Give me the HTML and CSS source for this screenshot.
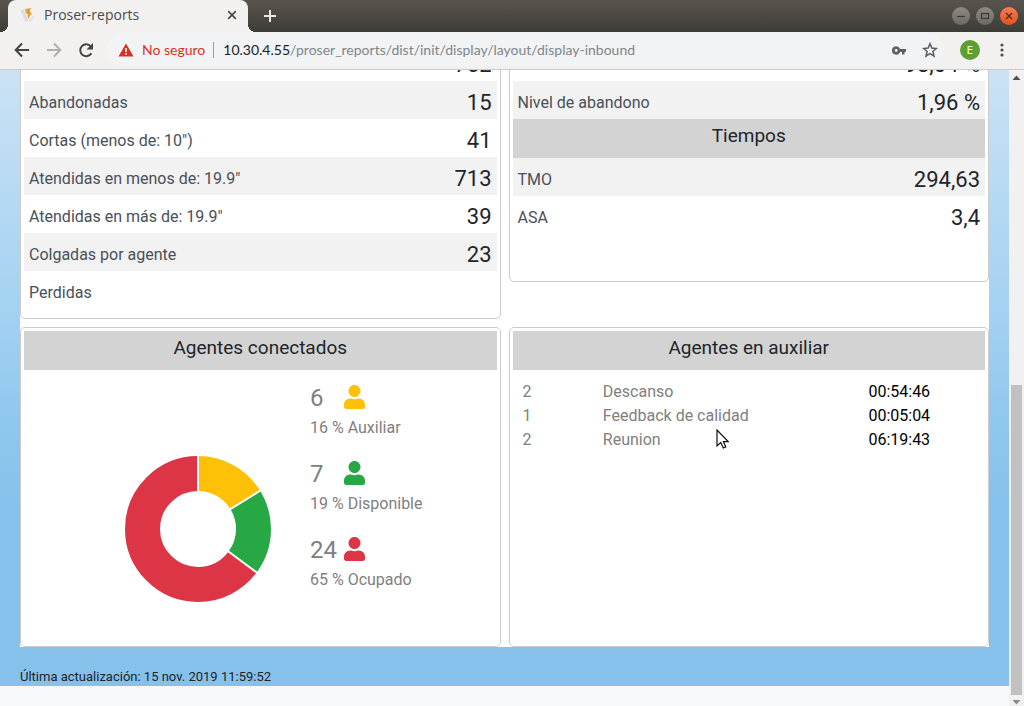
FILE: index.html
```html
<!DOCTYPE html>
<html lang="es">
<head>
<meta charset="utf-8">
<title>Proser-reports</title>
<link rel="stylesheet" href="styles.css">
</head>
<body>
<header class="browser">
  <div class="tabstrip">
    <div class="tab">
      <svg class="favicon" width="16" height="16" viewBox="0 0 16 16" aria-hidden="true"><path d="M.5 3.500l3-1.500 5 11.500-3 1.500z" fill="#d9dde8"/><path d="M5 2l6-1-1.500 4 2.500 1-4 6-.5-5-1.500-.5z" fill="#e8a33a"/><path d="M8 3l2 1-2 3z" fill="#c98d35"/><path d="M9 13.500l4.500-5 1 2-4 4.500z" fill="#e0e3ea"/></svg>
      <span class="tab-title">Proser-reports</span>
      <button class="tab-close" type="button" aria-label="Cerrar pestaña"><svg width="10" height="10" viewBox="0 0 10 10"><path d="M1.200 1.200l7.600 7.600M8.800 1.200l-7.600 7.600" stroke="#4a4a4a" stroke-width="1.700"/></svg></button>
    </div>
    <button class="new-tab" type="button" aria-label="Nueva pestaña"><svg width="12" height="12" viewBox="0 0 12 12"><path d="M6 0v12M0 6h12" stroke="#e8e7e3" stroke-width="2"/></svg></button>
    <div class="window-buttons">
      <button class="win" type="button" aria-label="Minimizar"><svg width="18" height="18" viewBox="0 0 18 18"><path d="M5 9.500h8" stroke="#3c3b37" stroke-width="1.200"/></svg></button>
      <button class="win" type="button" aria-label="Maximizar"><svg width="18" height="18" viewBox="0 0 18 18"><rect x="5.500" y="6.500" width="7" height="5" fill="none" stroke="#3c3b37" stroke-width="1.200"/></svg></button>
      <button class="win win-close" type="button" aria-label="Cerrar"><svg width="18" height="18" viewBox="0 0 18 18"><path d="M6 6l6 6M12 6l-6 6" stroke="#4a2a1a" stroke-width="1.200"/></svg></button>
    </div>
  </div>
  <div class="toolbar">
    <nav class="nav">
      <button type="button" aria-label="Atrás"><svg width="16" height="16" viewBox="0 0 16 16"><path d="M15 8H2M8 1.500L1.700 8 8 14.500" fill="none" stroke="#434343" stroke-width="2"/></svg></button>
      <button type="button" aria-label="Adelante"><svg width="16" height="16" viewBox="0 0 16 16"><path d="M1 8h13M8 1.500L14.300 8 8 14.500" fill="none" stroke="#b0b0b0" stroke-width="2"/></svg></button>
      <button type="button" aria-label="Recargar"><svg width="16" height="16" viewBox="0 0 16 16"><path d="M13.400 11.300A6 6 0 1 1 12.800 4.300" fill="none" stroke="#434343" stroke-width="2"/><path d="M15 1v6.500H8.500z" fill="#434343"/></svg></button>
    </nav>
    <div class="omnibox">
      <svg width="16" height="14" viewBox="0 0 16 14" aria-hidden="true"><path d="M8 .5L15.500 13.500H.5z" fill="#d93025"/><path d="M7.200 5h1.600v4H7.200zM7.200 10h1.600v1.700H7.200z" fill="#fff"/></svg>
      <span class="insecure">No seguro</span>
      <label class="host" for="url">10.30.4.55</label><input class="path" id="url" type="text" value="/proser_reports/dist/init/display/layout/display-inbound">
      <button type="button" aria-label="Contraseñas"><svg width="14" height="9" viewBox="0 0 14 9"><path d="M4.200.3a4.200 4.200 0 1 0 3.900 5.700H10v2.500h2.500V6H14V3H8.100A4.200 4.200 0 0 0 4.200.3zm0 2.800a1.400 1.400 0 1 1 0 2.800 1.400 1.400 0 0 1 0-2.800z" fill="#5f6368" fill-rule="evenodd"/></svg></button>
      <button type="button" aria-label="Favoritos"><svg width="16" height="16" viewBox="0 0 16 16"><path d="M8 1.800l1.800 4.300 4.600.4-3.500 3 1.100 4.600-4-2.500-4 2.500 1.100-4.600-3.500-3 4.600-.4z" fill="none" stroke="#5a5d61" stroke-width="1.500"/></svg></button>
    </div>
    <button class="avatar" type="button">E</button>
    <button class="menu" type="button" aria-label="Menú"><svg width="4" height="14" viewBox="0 0 4 14" fill="#505050"><circle cx="2" cy="2" r="1.600"/><circle cx="2" cy="7" r="1.600"/><circle cx="2" cy="12" r="1.600"/></svg></button>
  </div>
</header>
<div class="viewport">
  <main class="page">
    <section class="display">
      <div class="board">
        <div class="card card-calls">
          <table class="metrics">
            <tr><th></th><td>752</td></tr>
            <tr><th>Abandonadas</th><td>15</td></tr>
            <tr><th>Cortas (menos de: 10")</th><td>41</td></tr>
            <tr><th>Atendidas en menos de: 19.9"</th><td>713</td></tr>
            <tr><th>Atendidas en más de: 19.9"</th><td>39</td></tr>
            <tr><th>Colgadas por agente</th><td>23</td></tr>
            <tr><th>Perdidas</th><td></td></tr>
          </table>
        </div>
        <div class="card card-levels">
          <table class="metrics">
            <tr><th></th><td>98,04 %</td></tr>
            <tr><th>Nivel de abandono</th><td>1,96 %</td></tr>
          </table>
          <h2 class="heading">Tiempos</h2>
          <table class="metrics metrics-odd">
            <tr><th>TMO</th><td>294,63</td></tr>
            <tr><th>ASA</th><td>3,4</td></tr>
          </table>
        </div>
        <div class="card card-agents">
          <h2 class="heading">Agentes conectados</h2>
          <div class="agents">
            <svg class="donut" width="146" height="146" viewBox="-73 -73 146 146" role="img" aria-label="Agentes por estado">
              <g fill="none" stroke-width="35" transform="rotate(-90)">
                <circle r="55.500" stroke="#ffc107" pathLength="37" stroke-dasharray="6 31"/>
                <circle r="55.500" stroke="#28a745" pathLength="37" stroke-dasharray="0 6 7 24"/>
                <circle r="55.500" stroke="#dc3545" pathLength="37" stroke-dasharray="0 13 24 0"/>
              </g>
              <g stroke="#fff" stroke-width="2"><path d="M0-37v-37"/><path d="M0-37v-37" transform="rotate(58.400)"/><path d="M0-37v-37" transform="rotate(126.500)"/></g>
            </svg>
            <ul class="states">
              <li><div class="count"><span>6</span><svg class="user-aux" width="21" height="24" viewBox="0 0 448 512"><use href="#user"/></svg></div><p>16 % Auxiliar</p></li>
              <li><div class="count"><span>7</span><svg class="user-free" width="21" height="24" viewBox="0 0 448 512"><use href="#user"/></svg></div><p>19 % Disponible</p></li>
              <li><div class="count"><span>24</span><svg class="user-busy" width="21" height="24" viewBox="0 0 448 512"><use href="#user"/></svg></div><p>65 % Ocupado</p></li>
            </ul>
          </div>
        </div>
        <div class="card card-aux">
          <h2 class="heading">Agentes en auxiliar</h2>
          <table class="aux">
            <tr><td class="aux-count">2</td><td class="aux-name">Descanso</td><td class="aux-time">00:54:46</td></tr>
            <tr><td>1</td><td>Feedback de calidad</td><td class="aux-time">00:05:04</td></tr>
            <tr><td>2</td><td>Reunion</td><td class="aux-time">06:19:43</td></tr>
          </table>
          <svg class="cursor" width="13" height="20" viewBox="0 0 13 20" aria-hidden="true"><path d="M1 1v16l3.700-3.400 2.600 5.400 2.500-1.100-2.400-5.300h4.800z" fill="#fff" stroke="#111" stroke-width="1.200"/></svg>
        </div>
      </div>
      <p class="updated">Última actualización: 15 nov. 2019 11:59:52</p>
    </section>
    <div class="page-end"></div>
  </main>
  <div class="scrollbar" aria-hidden="true">
    <svg class="arrow" width="15" height="15" viewBox="0 0 15 15"><path d="M3.500 10L7.500 5.500 11.500 10z" fill="#505050"/></svg>
    <div class="track"></div>
    <div class="thumb"></div>
    <svg class="arrow-down" width="15" height="11" viewBox="0 0 15 11"><path d="M3.500 5h8L7.500 9.500z" fill="#8a8a8a"/></svg>
  </div>
</div>
<svg width="0" height="0" class="defs" aria-hidden="true"><defs><path id="user" d="M224 256c70.700 0 128-57.300 128-128S294.700 0 224 0 96 57.300 96 128s57.300 128 128 128zm89.600 32h-16.700c-22.200 10.200-46.900 16-72.900 16s-50.600-5.800-72.900-16h-16.700C60.200 288 0 348.200 0 422.400V464c0 26.500 21.500 48 48 48h352c26.500 0 48-21.500 48-48v-41.600c0-74.200-60.200-134.400-134.400-134.400z"/></defs></svg>
</body>
</html>
```
FILE: styles.css
```css
* { box-sizing: border-box; }
body {
  margin: 0;
  height: 100vh;
  display: flex;
  flex-direction: column;
  overflow: hidden;
  font: 16px/24px Roboto, sans-serif;
  color: #212529;
}
button {
  border: 0;
  padding: 0;
  background: none;
  display: flex;
  align-items: center;
  justify-content: center;
}
h2, p, ul { margin: 0; padding: 0; }
.defs { position: absolute; }

/* Browser frame */
.browser { font-family: "Open Sans", "Noto Sans", sans-serif; font-size: 14px; }
.tabstrip {
  display: flex;
  align-items: center;
  height: 32px;
  padding: 0 6px 0 8px;
  background: linear-gradient(#59554e, #3d3c37);
}
.tab {
  position: relative;
  display: flex;
  align-items: center;
  gap: 8px;
  width: 240px;
  height: 32px;
  padding: 0 10px 2px 12px;
  border-radius: 8px 8px 0 0;
  background: #f2f1f0;
  color: #4b4b4b;
}
.tab::before, .tab::after {
  content: "";
  position: absolute;
  bottom: 0;
  width: 8px;
  height: 8px;
}
.tab::before { right: 100%; background: radial-gradient(circle at 0 0, transparent 8px, #f2f1f0 8px); }
.tab::after { left: 100%; background: radial-gradient(circle at 100% 0, transparent 8px, #f2f1f0 8px); }
.tab-title { flex: 1; }
.tab-close { width: 12px; height: 16px; }
.new-tab { width: 28px; height: 28px; margin-left: 8px; }
.window-buttons { display: flex; gap: 6px; margin-left: auto; }
.win { width: 18px; height: 18px; border-radius: 50%; background: linear-gradient(#8d8b84, #6b6963); }
.win-close { background: linear-gradient(#f77c54, #e2511f); }
.toolbar {
  display: flex;
  align-items: center;
  height: 38px;
  padding: 0 20px 1px 14px;
  background: #f2f1f0;
  border-bottom: 1px solid #cccbca;
}
.nav { display: flex; gap: 16px; }
.omnibox {
  flex: 1;
  display: flex;
  align-items: center;
  height: 32px;
  margin: 0 16px 0 12px;
  padding: 0 6px 0 12px;
  border-radius: 16px;
  background: #f1f3f4;
  font-family: Lato, sans-serif;
}
.insecure {
  margin-left: 8px;
  padding-right: 8px;
  border-right: 1px solid #9a9c9e;
  line-height: 16px;
  color: #d93025;
}
.host { margin-left: 9px; color: #202124; }
.path {
  flex: 1;
  min-width: 0;
  padding: 0;
  border: 0;
  background: none;
  font: inherit;
  color: #80868b;
}
.omnibox button { margin-left: 16px; }
.avatar {
  width: 20px;
  height: 20px;
  border-radius: 50%;
  background: #5c9e31;
  color: #fff;
  font: 11px Roboto, sans-serif;
}
.menu { margin-left: 20px; }

/* Page area, scrolled to its end */
.viewport { flex: 1; min-height: 0; display: flex; }
.page {
  flex: 1;
  display: flex;
  flex-direction: column;
  justify-content: flex-end;
  overflow: hidden;
  background: linear-gradient(#cbe2f4, #a6d3f2 35%, #8ec6ed 58%, #85c1eb 70%);
}
.display { flex: none; padding: 0 20px; }
.board {
  display: grid;
  grid-template-columns: 1fr 1fr;
  gap: 8px;
  align-items: start;
  background: #fff;
}
.card {
  position: relative;
  padding: 3px;
  border: 1px solid #ccc;
  border-radius: 5px;
  background: #fff;
}
.card-calls { padding-bottom: 9px; }
.card-levels { padding-bottom: 47px; }
.card-agents, .card-aux { height: 320px; }
.heading {
  height: 39px;
  padding-top: 5px;
  background: #d3d3d3;
  font-size: 19px;
  font-weight: 400;
  line-height: 24px;
  text-align: center;
}
.metrics { width: 100%; border-collapse: collapse; }
.metrics tr { height: 38px; }
.metrics tr:nth-child(even) { background: #f2f2f2; }
.metrics-odd tr:nth-child(odd) { background: #f2f2f2; }
.metrics-odd tr:nth-child(even) { background: none; }
.metrics th, .metrics td { padding: 6px 5px 0; }
.metrics th { font-weight: 400; text-align: left; color: #495057; }
.metrics td { font-size: 22px; text-align: right; }

.agents {
  display: grid;
  grid-template-columns: 286px 1fr;
  align-items: start;
  padding-top: 10px;
  color: #808080;
}
.donut { justify-self: end; margin: 76px 39px 0 0; }
.states { list-style: none; display: grid; gap: 16px; }
.count { display: flex; align-items: center; height: 36px; font-size: 24px; }
.count span { width: 34px; }
.count svg { margin-bottom: 2px; }
.user-aux { fill: #ffc107; }
.user-free { fill: #28a745; }
.user-busy { fill: #dc3545; }

.aux { width: 100%; margin-top: 10px; border-collapse: collapse; table-layout: fixed; color: #808080; }
.aux td { padding: 0 0 0 10px; }
.aux-count { width: 17%; }
.aux-name { width: 56%; }
.aux .aux-time { padding-left: 11px; color: #000; }
.cursor { position: absolute; top: 101px; left: 206px; }

.updated { padding-top: 21px; font-size: 13px; line-height: 18px; }
.page-end { flex: none; height: 20px; background: #f8f9fa; }

/* Scrollbar */
.scrollbar {
  display: flex;
  flex-direction: column;
  width: 15px;
  background: #f1f1f1;
}
.track { flex: 30; }
.thumb { flex: 31; margin: 0 2px; background: #c1c1c1; }
```
